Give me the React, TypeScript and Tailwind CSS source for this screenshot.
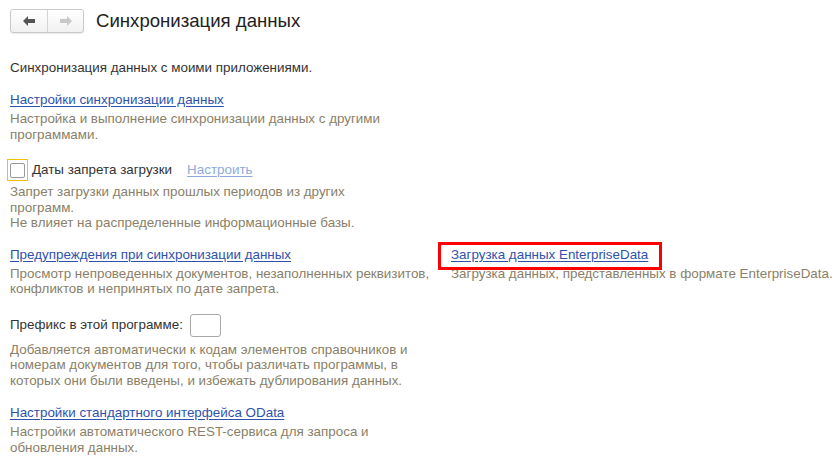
import React from "react";

const desc = "text-[#8a7f68] leading-[15.5px]";
const link = "text-[#2f52ad] underline underline-offset-[2px] decoration-[#2f52ad]";

function Arrow({ dir, color }: { dir: "left" | "right"; color: string }) {
  return (
    <svg width="12" height="10" viewBox="0 0 12 10" className={dir === "right" ? "rotate-180" : ""}>
      <path d="M0 5 L5 0 L5 3 L12 3 L12 7 L5 7 L5 10 Z" fill={color} />
    </svg>
  );
}

export default function App() {
  return (
    <div className="min-h-screen w-[835px] bg-white pl-[10px] font-['Arial','Liberation_Sans',sans-serif] text-[13.4px] leading-4 text-[#333]">
      {/* header */}
      <div className="flex items-center pt-[9px]">
        <div className="flex h-[24px] rounded-[3px] border border-[#c9c9c9] bg-gradient-to-b from-white to-[#f1f1f1] shadow-[0_1px_1px_rgba(0,0,0,0.08)]">
          <button className="flex w-[37px] items-center justify-center border-r border-[#d4d4d4]">
            <Arrow dir="left" color="#555" />
          </button>
          <button className="flex w-[35px] items-center justify-center">
            <Arrow dir="right" color="#c8c8c8" />
          </button>
        </div>
        <h1 className="ml-[12px] text-[18.6px] leading-6 text-[#222]">Синхронизация данных</h1>
      </div>

      <p className="mt-[27px]">Синхронизация данных с моими приложениями.</p>

      <div className="mt-[16px]">
        <a href="#" className={link}>Настройки синхронизации данных</a>
      </div>
      <p className={`mt-[3px] w-[400px] ${desc}`}>
        Настройка и выполнение синхронизации данных с другими программами.
      </p>

      <div className="mt-[17px] flex items-center">
        <span className="-ml-[3px] flex h-[22px] w-[21px] items-center justify-center border border-[#f2c200]">
          <span className="h-[15px] w-[15px] rounded-[2px] border border-[#9a9a9a] bg-white" />
        </span>
        <span className="ml-[4px]">Даты запрета загрузки</span>
        <a href="#" className="ml-[15px] text-[#8eaadc] underline underline-offset-[2px]">Настроить</a>
      </div>
      <p className={`mt-[3px] w-[370px] ${desc}`}>
        Запрет загрузки данных прошлых периодов из других программ.
        <br />
        Не влияет на распределенные информационные базы.
      </p>

      <div className="mt-[16px] flex">
        <div className="w-[441px]">
          <a href="#" className={link}>Предупреждения при синхронизации данных</a>
          <p className={`mt-[3px] w-[428px] ${desc}`}>
            Просмотр непроведенных документов, незаполненных реквизитов, конфликтов и непринятых по дате запрета.
          </p>
        </div>
        <div>
          <span className="relative inline-block">
            <span className="absolute -bottom-[7px] -left-[13px] -right-[14px] -top-[5px] border-[3px] border-[#f00]" />
            <a href="#" className={link}>Загрузка данных EnterpriseData</a>
          </span>
          <p className={`mt-[3px] ${desc}`}>Загрузка данных, представленных в формате EnterpriseData.</p>
        </div>
      </div>

      <div className="mt-[17px] flex items-center">
        <span>Префикс в этой программе:</span>
        <span className="ml-[7px] h-[23px] w-[31px] rounded-[3px] border border-[#a9a9a9] bg-white" />
      </div>
      <p className={`mt-[5px] w-[412px] ${desc}`}>
        Добавляется автоматически к кодам элементов справочников и номерам документов для того, чтобы различать программы, в которых они были введены, и избежать дублирования данных.
      </p>

      <div className="mt-[17px]">
        <a href="#" className={link}>Настройки стандартного интерфейса OData</a>
      </div>
      <p className={`mt-[3px] w-[400px] ${desc}`}>
        Настройки автоматического REST-сервиса для запроса и обновления данных.
      </p>
    </div>
  );
}
